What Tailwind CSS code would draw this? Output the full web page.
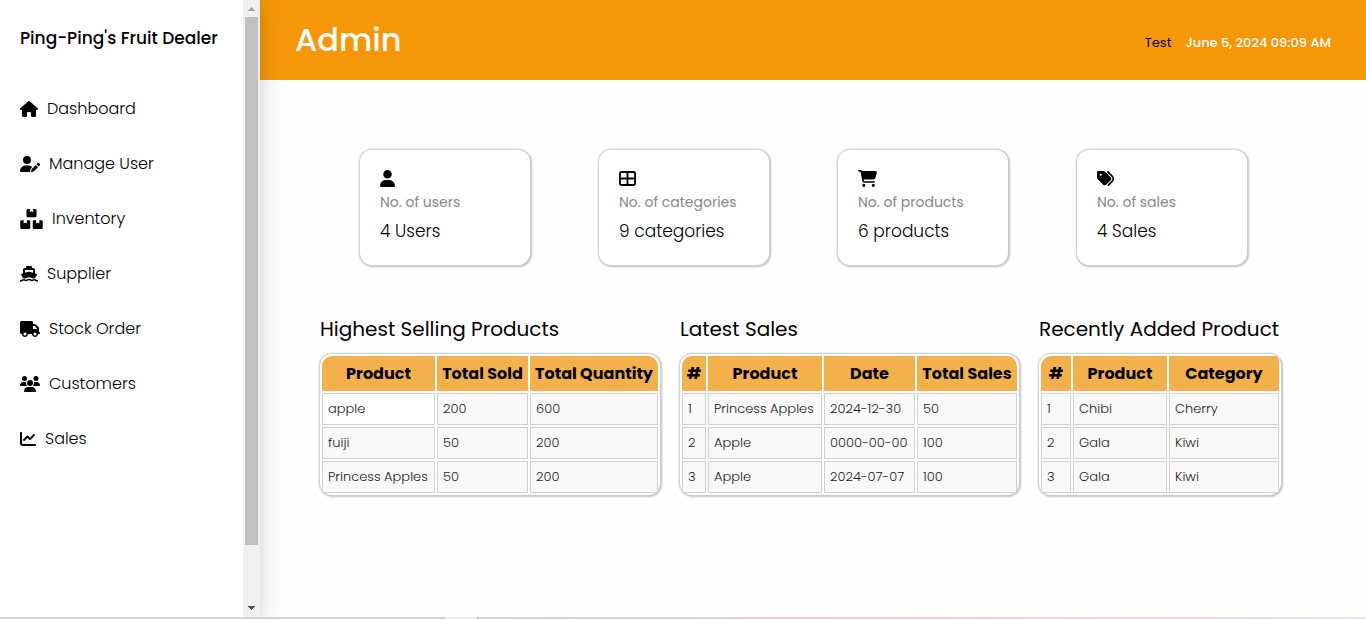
<!DOCTYPE html>
<html lang="en">
<head>
<meta charset="utf-8">
<meta name="viewport" content="width=device-width, initial-scale=1">
<title>Ping-Ping's Fruit Dealer</title>
<script src="https://cdn.jsdelivr.net/npm/@tailwindcss/browser@4"></script>
</head>
<body class="font-[Poppins,Inter,sans-serif] text-black bg-[#fefefe]">
<div class="flex flex-col min-h-screen">
<div class="flex grow">

<aside class="w-[260px] shrink-0 flex bg-white relative z-10 shadow-[0_5px_20px_rgba(0,0,0,0.2)]">
  <div class="grow">
    <h1 class="h-[78px] px-5 flex items-center text-[17px] font-medium whitespace-nowrap">Ping-Ping's Fruit Dealer</h1>
    <nav class="flex flex-col gap-[15px] px-5 pt-[11px] text-base font-light">
      <a href="#" class="flex items-center gap-[9px] h-10"><svg class="h-4 w-[18px]" viewBox="0 0 576 512"><path d="M575.8 255.5c0 18-15 32.1-32 32.1h-32l.7 160.2c0 2.7-.2 5.4-.5 8.1V472c0 22.1-17.9 40-40 40H456c-1.1 0-2.2 0-3.3-.1c-1.4 .1-2.8 .1-4.2 .1H416 392c-22.1 0-40-17.9-40-40V448 384c0-17.7-14.3-32-32-32H256c-17.7 0-32 14.3-32 32v64 24c0 22.1-17.9 40-40 40H160 128.1c-1.5 0-3-.1-4.5-.2c-1.2 .1-2.4 .2-3.6 .2H104c-22.1 0-40-17.9-40-40V360c0-.9 0-1.9 .1-2.8V287.6H32c-18 0-32-14-32-32.1c0-9 3-17 10-24L266.4 8c7-7 15-8 22-8s15 2 21 7L564.8 231.5c8 7 12 15 11 24z"/></svg>Dashboard</a>
      <a href="#" class="flex items-center gap-[9px] h-10"><svg class="h-4 w-5" viewBox="0 0 640 512"><path d="M224 256A128 128 0 1 0 224 0a128 128 0 1 0 0 256zm-45.7 48C79.8 304 0 383.8 0 482.3C0 498.7 13.3 512 29.7 512H322.8c-3.1-8.8-3.7-18.4-1.4-27.8l15-60.1c2.8-11.3 8.6-21.5 16.8-29.7l40.3-40.3c-32.1-31-75.7-50.1-123.9-50.1H178.3zm435.5-68.3c-15.6-15.6-40.9-15.6-56.6 0l-29.4 29.4 71 71 29.4-29.4c15.6-15.6 15.6-40.9 0-56.6l-14.4-14.4zM375.9 417c-4.1 4.1-7 9.2-8.4 14.9l-15 60.1c-1.4 5.5 .2 11.2 4.2 15.2s9.7 5.6 15.2 4.2l60.1-15c5.6-1.4 10.8-4.3 14.9-8.4L576.1 358.7l-71-71L375.9 417z"/></svg>Manage User</a>
      <a href="#" class="flex items-center gap-[9px] h-10"><svg class="h-5 w-[23px]" viewBox="0 0 576 512"><path d="M192 0h54v80l42-22 42 22V0h54q32 0 32 32v144q0 32-32 32H192q-32 0-32-32V32q0-32 32-32zM32 288h54v80l42-22 42 22v-80h54q32 0 32 32v160q0 32-32 32H32q-32 0-32-32V320q0-32 32-32zM352 288h54v80l42-22 42 22v-80h54q32 0 32 32v160q0 32-32 32H352q-32 0-32-32V320q0-32 32-32z"/></svg>Inventory</a>
      <a href="#" class="flex items-center gap-[9px] h-10"><svg class="h-4 w-[18px]" viewBox="0 0 576 512"><path fill-rule="evenodd" d="M192 32q0-32 32-32h128q32 0 32 32v32h48q48 0 48 48v128l44 14q36 12 14 44l-58 82q-28 22-56 22-38 0-72-24-28-20-64-20t-64 20q-34 24-72 24-28 0-56-22l-58-82q-22-32 14-44l44-14V112q0-48 48-48h48zM160 128v91l108-35q20-6 40 0l108 35v-91z"/><path d="M16 468q44 0 82-30 24-18 46 0 48 30 96 0 24-14 48-14t48 14q48 30 96 0 22-18 46 0 38 30 82 30" transform="translate(0 8)" fill="none" stroke="#000" stroke-width="48" stroke-linecap="round"/></svg>Supplier</a>
      <a href="#" class="flex items-center gap-[9px] h-10"><svg class="h-4 w-5" viewBox="0 0 640 512"><path d="M48 0C21.5 0 0 21.5 0 48V368c0 26.5 21.5 48 48 48H64c0 53 43 96 96 96s96-43 96-96H384c0 53 43 96 96 96s96-43 96-96h32c17.7 0 32-14.3 32-32s-14.3-32-32-32V288 256 237.3c0-17-6.7-33.3-18.7-45.3L512 114.7c-12-12-28.3-18.7-45.3-18.7H416V48c0-26.5-21.5-48-48-48H48zM416 160h50.7L544 237.3V256H416V160zM112 416a48 48 0 1 1 96 0 48 48 0 1 1 -96 0zm368-48a48 48 0 1 1 0 96 48 48 0 1 1 0-96z"/></svg>Stock Order</a>
      <a href="#" class="flex items-center gap-[9px] h-10"><svg class="h-4 w-5" viewBox="0 0 640 512"><path d="M144 0a80 80 0 1 1 0 160A80 80 0 1 1 144 0zM512 0a80 80 0 1 1 0 160A80 80 0 1 1 512 0zM0 298.7C0 239.8 47.8 192 106.7 192h42.7c15.9 0 31 3.5 44.6 9.7c-1.3 7.2-1.9 14.7-1.9 22.3c0 38.2 16.8 72.5 43.3 96c-.2 0-.4 0-.7 0H21.3C9.6 320 0 310.4 0 298.7zM405.3 320c-.2 0-.4 0-.7 0c26.6-23.5 43.3-57.8 43.3-96c0-7.6-.7-15-1.9-22.3c13.6-6.3 28.7-9.7 44.6-9.7h42.7C592.2 192 640 239.8 640 298.7c0 11.8-9.6 21.3-21.3 21.3H405.3zM224 224a96 96 0 1 1 192 0 96 96 0 1 1 -192 0zM128 485.3C128 411.7 187.7 352 261.3 352H378.7C452.3 352 512 411.7 512 485.3c0 14.7-11.9 26.7-26.7 26.7H154.7c-14.7 0-26.7-11.9-26.7-26.7z"/></svg>Customers</a>
      <a href="#" class="flex items-center gap-[9px] h-10"><svg class="h-4 w-4" viewBox="0 0 512 512"><path d="M64 64c0-17.7-14.3-32-32-32S0 46.3 0 64V400c0 44.2 35.8 80 80 80H480c17.7 0 32-14.3 32-32s-14.3-32-32-32H80c-8.8 0-16-7.2-16-16V64zm406.6 86.6c12.5-12.5 12.5-32.8 0-45.3s-32.8-12.5-45.3 0L320 210.7l-57.4-57.4c-12.5-12.5-32.8-12.5-45.3 0l-112 112c-12.5 12.5-12.5 32.8 0 45.3s32.8 12.5 45.3 0L240 221.3l57.4 57.4c12.5 12.5 32.8 12.5 45.3 0l128-128z"/></svg>Sales</a>
    </nav>
  </div>
  <!-- Sidebar scrollbar -->
  <div class="w-[17px] bg-[#f0f0f0] flex flex-col items-center" aria-hidden="true">
    <div class="h-[17px] flex items-center"><svg class="w-[7px] h-1" viewBox="0 0 7 4"><path fill="#a3a3a3" d="M3 0h1v1h1v1h1v1h1v1H0V3h1V2h1V1h1z"/></svg></div>
    <div class="w-[13px] h-[528px] bg-[#c1c1c1]"></div>
    <div class="grow"></div>
    <div class="h-[19px] flex items-center"><svg class="w-[7px] h-1" viewBox="0 0 7 4"><path fill="#505050" d="M0 0h7v1H6v1H5v1H4v1H3V3H2V2H1V1H0z"/></svg></div>
  </div>
</aside>

<div class="grow min-w-0">
  <header class="h-20 bg-[#f69707] flex items-center justify-between px-[35px]">
    <h2 class="text-[32px] font-medium text-[#fefefe]">Admin</h2>
    <div class="flex gap-[14px] pt-[5px] text-[13px]"><span>Test</span><time class="font-medium text-[#fefefe]">June 5, 2024 09:09 AM</time></div>
  </header>

  <main class="pl-[60px] pr-[85px] pt-[70px]">
    <section class="flex justify-between pl-10 pr-[34px]">
      <article class="w-[170px] h-[115px] rounded-xl bg-white px-5 pt-5 shadow-[0_0_2px_1px_#cccccc,1px_1px_2px_1px_#c6c6c6] whitespace-nowrap">
        <svg class="h-[17px] w-[15px]" viewBox="0 0 448 512"><path d="M224 256A128 128 0 1 0 224 0a128 128 0 1 0 0 256zm-45.7 48C79.8 304 0 383.8 0 482.3C0 498.7 13.3 512 29.7 512H418.3c16.4 0 29.7-13.3 29.7-29.7C448 383.8 368.2 304 269.7 304H178.3z"/></svg>
        <p class="text-sm leading-5 mt-[5px] text-[#888]">No. of users</p>
        <p class="text-[17px] leading-6 mt-[7px] font-light">4 Users</p>
      </article>
      <article class="w-[170px] h-[115px] rounded-xl bg-white px-5 pt-5 shadow-[0_0_2px_1px_#cccccc,1px_1px_2px_1px_#c6c6c6] whitespace-nowrap">
        <svg class="h-[17px] w-[17px]" viewBox="0 0 512 512"><path fill="none" stroke="#000" stroke-width="56" d="M72 60H440q44 0 44 44V408q0 44-44 44H72q-44 0-44-44V104q0-44 44-44zM256 60V452M28 256H484"/></svg>
        <p class="text-sm leading-5 mt-[5px] text-[#888]">No. of categories</p>
        <p class="text-[17px] leading-6 mt-[7px] font-light">9 categories</p>
      </article>
      <article class="w-[170px] h-[115px] rounded-xl bg-white px-5 pt-5 shadow-[0_0_2px_1px_#cccccc,1px_1px_2px_1px_#c6c6c6] whitespace-nowrap">
        <svg class="h-[17px] w-[19px]" viewBox="0 0 576 512"><path d="M0 24C0 10.7 10.7 0 24 0H69.5c22 0 41.5 12.8 50.6 32h411c26.3 0 45.5 25 38.6 50.4l-41 152.3c-8.5 31.4-37 53.3-69.5 53.3H170.7l5.4 28.5c2.2 11.3 12.1 19.5 23.6 19.5H488c13.3 0 24 10.7 24 24s-10.7 24-24 24H199.7c-34.6 0-64.3-24.6-70.7-58.5L77.4 54.5c-.7-3.8-4-6.5-7.9-6.5H24C10.7 48 0 37.3 0 24zM128 464a48 48 0 1 1 96 0 48 48 0 1 1 -96 0zm336-48a48 48 0 1 1 0 96 48 48 0 1 1 0-96z"/></svg>
        <p class="text-sm leading-5 mt-[5px] text-[#888]">No. of products</p>
        <p class="text-[17px] leading-6 mt-[7px] font-light">6 products</p>
      </article>
      <article class="w-[170px] h-[115px] rounded-xl bg-white px-5 pt-5 shadow-[0_0_2px_1px_#cccccc,1px_1px_2px_1px_#c6c6c6] whitespace-nowrap">
        <svg class="h-[17px] w-[17px]" viewBox="0 0 512 512"><path d="M345 39.1L472.8 168.4c52.4 53 52.4 138.2 0 191.2L360.8 472.9c-9.3 9.4-24.5 9.5-33.9 .2s-9.5-24.5-.2-33.9L438.6 325.9c33.9-34.3 33.9-89.4 0-123.7L310.9 72.9c-9.3-9.4-9.2-24.6 .2-33.9s24.6-9.2 33.9 .2zM0 229.5V80C0 53.5 21.5 32 48 32H197.5c17 0 33.3 6.7 45.3 18.7l168 168c25 25 25 65.5 0 90.5L277.3 442.7c-25 25-65.5 25-90.5 0l-168-168C6.7 262.7 0 246.5 0 229.5zM144 144a32 32 0 1 0 -64 0 32 32 0 1 0 64 0z"/></svg>
        <p class="text-sm leading-5 mt-[5px] text-[#888]">No. of sales</p>
        <p class="text-[17px] leading-6 mt-[7px] font-light">4 Sales</p>
      </article>
    </section>

    <div class="flex justify-between pt-12 whitespace-nowrap">
      <section>
        <h3 id="t1" class="text-xl leading-8 mb-[9px]">Highest Selling Products</h3>
        <table aria-labelledby="t1" class="table-fixed w-[340px] border-separate border-spacing-[2px] rounded-xl overflow-hidden bg-white shadow-[0_0_2px_1px_#cccccc,1px_1px_2px_1px_#c6c6c6] text-[13px] font-light text-[#222] [&_td]:h-8 [&_td]:px-[5px] [&_td]:border [&_td]:border-[#d0d0d0] [&_td]:bg-[#f9f9f9] [&_th]:p-0 [&_th]:h-[35px] [&_th]:bg-[#f4b04b] [&_th]:text-black [&_th]:text-base [&_th]:font-bold [&_th:first-child]:rounded-tl-[10px] [&_th:last-child]:rounded-tr-[10px]">
          <colgroup><col class="w-[113px]"><col class="w-[91px]"><col class="w-[128px]"></colgroup>
          <thead><tr><th>Product</th><th>Total Sold</th><th>Total Quantity</th></tr></thead>
          <tbody>
            <tr><td class="bg-white!">apple</td><td>200</td><td>600</td></tr>
            <tr><td>fuiji</td><td>50</td><td>200</td></tr>
            <tr><td>Princess Apples</td><td>50</td><td>200</td></tr>
          </tbody>
        </table>
      </section>
      <section>
        <h3 id="t2" class="text-xl leading-8 mb-[9px]">Latest Sales</h3>
        <table aria-labelledby="t2" class="table-fixed w-[339px] border-separate border-spacing-[2px] rounded-xl overflow-hidden bg-white shadow-[0_0_2px_1px_#cccccc,1px_1px_2px_1px_#c6c6c6] text-[13px] font-light text-[#222] [&_td]:h-8 [&_td]:px-[5px] [&_td]:border [&_td]:border-[#d0d0d0] [&_td]:bg-[#f9f9f9] [&_th]:p-0 [&_th]:h-[35px] [&_th]:bg-[#f4b04b] [&_th]:text-black [&_th]:text-base [&_th]:font-bold [&_th:first-child]:rounded-tl-[10px] [&_th:last-child]:rounded-tr-[10px]">
          <colgroup><col class="w-[24px]"><col class="w-[114px]"><col class="w-[91px]"><col class="w-[100px]"></colgroup>
          <thead><tr><th>#</th><th>Product</th><th>Date</th><th>Total Sales</th></tr></thead>
          <tbody>
            <tr><td>1</td><td>Princess Apples</td><td>2024-12-30</td><td>50</td></tr>
            <tr><td>2</td><td>Apple</td><td>0000-00-00</td><td>100</td></tr>
            <tr><td>3</td><td>Apple</td><td>2024-07-07</td><td>100</td></tr>
          </tbody>
        </table>
      </section>
      <section>
        <h3 id="t3" class="text-xl leading-8 mb-[9px]">Recently Added Product</h3>
        <table aria-labelledby="t3" class="table-fixed w-[242px] border-separate border-spacing-[2px] rounded-xl overflow-hidden bg-white shadow-[0_0_2px_1px_#cccccc,1px_1px_2px_1px_#c6c6c6] text-[13px] font-light text-[#222] [&_td]:h-8 [&_td]:px-[5px] [&_td]:border [&_td]:border-[#d0d0d0] [&_td]:bg-[#f9f9f9] [&_th]:p-0 [&_th]:h-[35px] [&_th]:bg-[#f4b04b] [&_th]:text-black [&_th]:text-base [&_th]:font-bold [&_th:first-child]:rounded-tl-[10px]">
          <colgroup><col class="w-[30px]"><col class="w-[94px]"><col class="w-[110px]"></colgroup>
          <thead><tr><th>#</th><th>Product</th><th>Category</th></tr></thead>
          <tbody>
            <tr><td>1</td><td>Chibi</td><td>Cherry</td></tr>
            <tr><td>2</td><td>Gala</td><td>Kiwi</td></tr>
            <tr><td>3</td><td>Gala</td><td>Kiwi</td></tr>
          </tbody>
        </table>
      </section>
    </div>
  </main>
</div>
</div>
<!-- Bottom edge strip -->
<div class="h-[2px] flex relative z-20" aria-hidden="true">
  <div class="w-[445px] bg-[#d4d4d4]"></div>
  <div class="w-8 bg-[#eeeeee]"></div>
  <div class="w-px bg-[#b0b0b0]"></div>
  <div class="grow bg-linear-to-r from-[#d4d4d4] via-[#e8d2d6] to-[#ece4e0]"></div>
</div>
</div>
</body>
</html>
